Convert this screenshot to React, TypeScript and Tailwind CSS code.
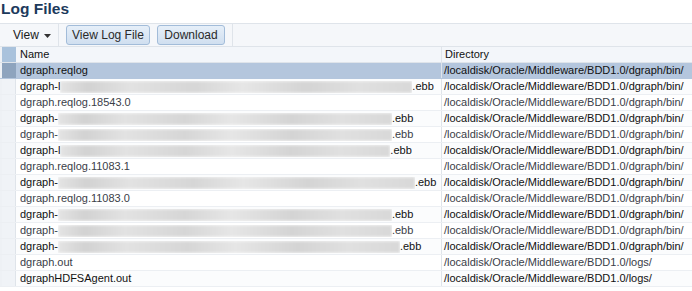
import React from 'react'

type Row = {
  name: string
  blur?: number
  dir: string
}

const BIN = '/localdisk/Oracle/Middleware/BDD1.0/dgraph/bin/'
const LOGS = '/localdisk/Oracle/Middleware/BDD1.0/logs/'

const rows: Row[] = [
  { name: 'dgraph.reqlog', dir: BIN },
  { name: 'dgraph-l', blur: 352, dir: BIN },
  { name: 'dgraph.reqlog.18543.0', dir: BIN },
  { name: 'dgraph-', blur: 334, dir: BIN },
  { name: 'dgraph-', blur: 334, dir: BIN },
  { name: 'dgraph-l', blur: 330, dir: BIN },
  { name: 'dgraph.reqlog.11083.1', dir: BIN },
  { name: 'dgraph-', blur: 357, dir: BIN },
  { name: 'dgraph.reqlog.11083.0', dir: BIN },
  { name: 'dgraph-', blur: 334, dir: BIN },
  { name: 'dgraph-', blur: 334, dir: BIN },
  { name: 'dgraph-', blur: 342, dir: BIN },
  { name: 'dgraph.out', dir: LOGS },
  { name: 'dgraphHDFSAgent.out', dir: LOGS },
]

function Smudge({ width }: { width: number }) {
  return (
    <span className="inline-block h-[12px] overflow-hidden align-middle" style={{ width }}>
      <span className="block h-full w-full blur-[1.5px] bg-[linear-gradient(90deg,#e4e4e4,#d2d2d2_8%,#e2e2e2_20%,#d6d6d6_38%,#e6e6e6_52%,#d4d4d4_70%,#e0e0e0_85%,#d8d8d8)]" />
    </span>
  )
}

export default function App() {
  return (
    <div className="w-[692px] h-[291px] overflow-hidden bg-white font-['Liberation_Sans',Arial,sans-serif] text-[11px]">
      <h1 className="h-[23px] pl-[1px] text-[15.5px] font-bold leading-[17px] text-[#1c3a5c]">Log Files</h1>

      {/* toolbar */}
      <div className="flex h-[24px] items-center border-y border-[#dfe4ea] bg-[#f5f7fa] text-[#1a1a1a]">
        <div className="flex h-full w-[59px] items-center gap-[5px] border-r border-[#dfe4ea] pl-[13px] text-[12px]">
          View
          <svg width="7" height="4" viewBox="0 0 7 4" className="mt-[1px]">
            <path d="M0 0h7L3.5 4z" fill="#333" />
          </svg>
        </div>
        <div className="flex h-full items-center gap-[7px] border-r border-[#dfe4ea] px-[7px] text-[12px]">
          <button className="h-[20px] w-[84px] rounded-[3px] border border-[#a2bcd9] bg-[linear-gradient(#e6eff9,#d0dff0)] text-[#2a2a2a]">
            View Log File
          </button>
          <button className="h-[20px] w-[68px] rounded-[3px] border border-[#a2bcd9] bg-[linear-gradient(#e6eff9,#d0dff0)] text-[#2a2a2a]">
            Download
          </button>
        </div>
      </div>

      {/* header */}
      <div className="flex h-[16px] border-b border-[#dfe4ea] bg-[#f3f6fa] leading-[15px] text-[#111]">
        <div className="w-[2px] bg-[#eef1f5]" />
        <div className="w-[14px] bg-[#a9c2dc]" />
        <div className="w-[426px] border-r border-[#dfe4ea] pl-[4px]">Name</div>
        <div className="flex-1 pl-[3px]">Directory</div>
      </div>

      {rows.map((r, i) => {
        const sel = i === 0
        const dim = i > 0 && i % 2 === 0
        return (
          <div
            key={i}
            className={`flex h-[16px] border-b leading-[15px] ${
              sel ? 'border-[#b4c6dd] bg-[#b4c6dd]' : dim ? 'border-[#eceff3] bg-white' : 'border-[#eceff3] bg-[#fbfcfd]'
            } ${dim ? 'text-[#3a4048]' : 'text-[#111]'}`}
          >
            <div className="w-[2px] bg-[#eef1f5]" />
            <div className={`w-[14px] border-r ${sel ? 'border-[#8ea4be] bg-[#8ea4be]' : 'border-[#dfe4ea] bg-[#f0f3f7]'}`} />
            <div className="w-[426px] whitespace-nowrap border-r border-[#dfe4ea] pl-[4px]">
              {r.name}
              {r.blur ? (
                <>
                  <Smudge width={r.blur} />
                  .ebb
                </>
              ) : null}
            </div>
            <div className="flex-1 whitespace-nowrap pl-[2px]">{r.dir}</div>
          </div>
        )
      })}
    </div>
  )
}
